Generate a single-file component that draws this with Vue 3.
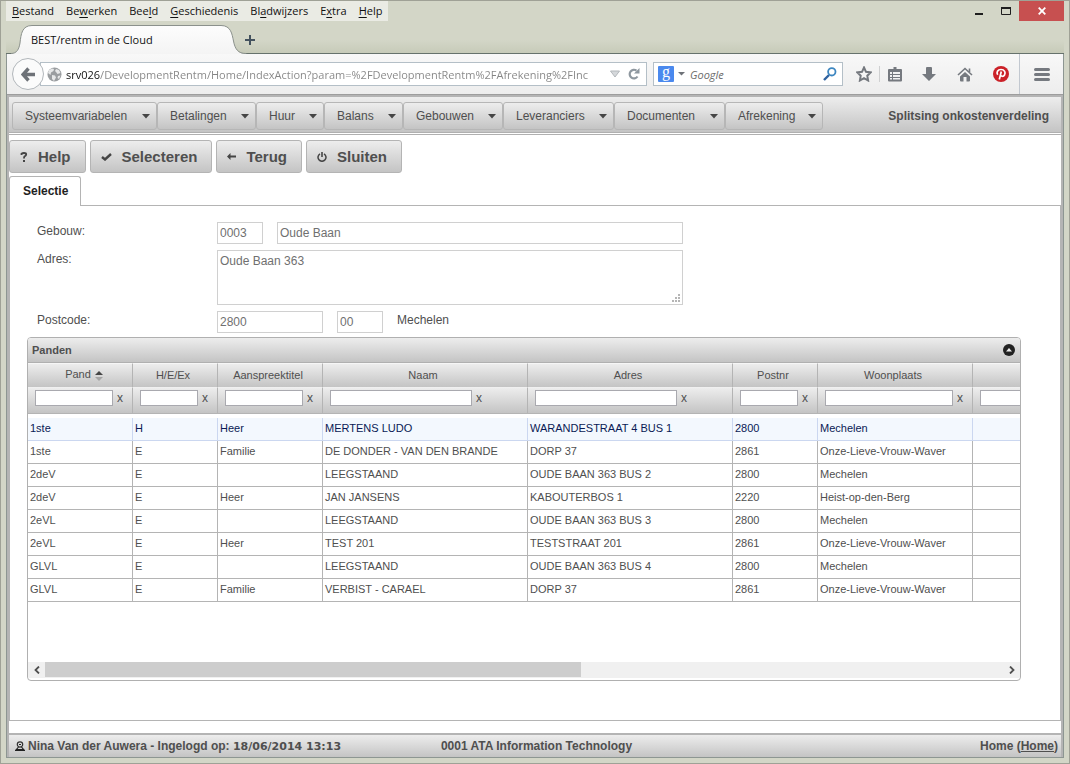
<script setup>
import { ref } from 'vue'

const browserMenu = [
  ['', 'B', 'estand'],
  ['Be', 'w', 'erken'],
  ['Bee', 'l', 'd'],
  ['', 'G', 'eschiedenis'],
  ['Bl', 'a', 'dwijzers'],
  ['E', 'x', 'tra'],
  ['', 'H', 'elp'],
]
const address = ref('srv026/DevelopmentRentm/Home/IndexAction?param=%2FDevelopmentRentm%2FAfrekening%2FInc')
const query = ref('')
const appMenu = ['Systeemvariabelen', 'Betalingen', 'Huur', 'Balans', 'Gebouwen', 'Leveranciers', 'Documenten', 'Afrekening']

const gebouwCode = ref('0003')
const gebouwNaam = ref('Oude Baan')
const adres = ref('Oude Baan 363')
const postcode = ref('2800')
const postcodeSub = ref('00')

const columns = [
  { label: 'Pand', size: 'c105', sorted: true },
  { label: 'H/E/Ex', size: 'c85' },
  { label: 'Aanspreektitel', size: 'c105' },
  { label: 'Naam', size: 'c205' },
  { label: 'Adres', size: 'c205' },
  { label: 'Postnr', size: 'c85' },
  { label: 'Woonplaats', size: 'c155' },
  { label: '', size: 'c205' },
]
const rows = [
  ['1ste', 'H', 'Heer', 'MERTENS LUDO', 'WARANDESTRAAT 4 BUS 1', '2800', 'Mechelen', ''],
  ['1ste', 'E', 'Familie', 'DE DONDER - VAN DEN BRANDE', 'DORP 37', '2861', 'Onze-Lieve-Vrouw-Waver', ''],
  ['2deV', 'E', '', 'LEEGSTAAND', 'OUDE BAAN 363 BUS 2', '2800', 'Mechelen', ''],
  ['2deV', 'E', 'Heer', 'JAN JANSENS', 'KABOUTERBOS 1', '2220', 'Heist-op-den-Berg', ''],
  ['2eVL', 'E', '', 'LEEGSTAAND', 'OUDE BAAN 363 BUS 3', '2800', 'Mechelen', ''],
  ['2eVL', 'E', 'Heer', 'TEST 201', 'TESTSTRAAT 201', '2861', 'Onze-Lieve-Vrouw-Waver', ''],
  ['GLVL', 'E', '', 'LEEGSTAAND', 'OUDE BAAN 363 BUS 4', '2800', 'Mechelen', ''],
  ['GLVL', 'E', 'Familie', 'VERBIST - CARAEL', 'DORP 37', '2861', 'Onze-Lieve-Vrouw-Waver', ''],
]
const selected = ref(0)
</script>

<template>
  <div class="window">
    <header class="titlebar">
      <nav class="browser-menu">
        <button v-for="m in browserMenu" :key="m.join('')">{{ m[0] }}<u>{{ m[1] }}</u>{{ m[2] }}</button>
      </nav>
      <div class="win-controls">
        <button aria-label="Minimaliseren"><svg width="8" height="10"><path d="M0 7h8v2H0z" fill="#1e1e1e" /></svg></button>
        <button aria-label="Maximaliseren"><svg width="10" height="8"><path d="M.5 1h9v6.5h-9z" fill="none" stroke="#1e1e1e" /><path d="M0 0h10v2H0z" fill="#1e1e1e" /></svg></button>
        <button class="close" aria-label="Sluiten"><svg width="8" height="8"><path d="M.7 .7l6.6 6.6M7.3 .7L.7 7.3" stroke="#fff" stroke-width="1.8" /></svg></button>
      </div>
    </header>

    <div class="tabstrip">
      <button class="browser-tab">
        <svg class="tab-shape" width="236" height="29" viewBox="0 0 236 29">
          <defs><linearGradient id="tg" x1="0" y1="0" x2="0" y2="1"><stop offset="0" stop-color="#fdfdfd" /><stop offset="1" stop-color="#f4f4f4" /></linearGradient></defs>
          <path d="M0 28.5C6 28.5 8 24 9 18C10 9 11 .5 21 .5H210C220 .5 221 9 222.500 16C224 24 227 28.500 233 28.500L236 29H0Z" fill="url(#tg)" />
          <path d="M0 28.500C6 28.500 8 24 9 18C10 9 11 .5 21 .5H210C220 .5 221 9 222.500 16C224 24 227 28.500 235 28.500" fill="none" stroke="#8b918c" />
        </svg>
        <span>BEST/rentm in de Cloud</span>
      </button>
      <button class="new-tab" aria-label="Nieuw tabblad"><svg width="10" height="10"><path d="M4 0h2v4h4v2H6v4H4V6H0V4h4z" fill="#44525e" /></svg></button>
    </div>

    <div class="frame">
      <div class="navbar">
        <button class="back" aria-label="Terug">
          <svg width="14" height="15" viewBox="0 0 14 15"><path d="M7.500 1.500L2 7.500l5.500 6M2.500 7.500H14" fill="none" stroke="#6e7278" stroke-width="3.400" /></svg>
        </button>
        <div class="urlbox">
          <svg width="15" height="15" viewBox="0 0 15 15"><circle cx="7.500" cy="7.500" r="7" fill="#9a9da0" /><path d="M2 3l3-1.500 2 .5-.5 2L4 5.500 3.500 8 1 6zM9 2l3 1 1.500 3-3 1-1.500-2 -1-1zM5 8l3 .5 1 2-2 3.500-2-2zM11 9l2.500-.5-1.500 3.500-1.500-1z" fill="#e6e7e8" /></svg>
          <input v-model="address" class="url" aria-label="Adres van de pagina" spellcheck="false">
          <svg width="10" height="8"><path d="M.5 1h9L5 7z" fill="#d5d8db" stroke="#b3b7bb" /></svg>
          <button aria-label="Vernieuwen"><svg width="12" height="12" viewBox="0 0 12 12"><path d="M9.500 8.500A4.300 4.300 0 1 1 8.500 2.600" fill="none" stroke="#8e979f" stroke-width="2.200" /><path d="M11.500 0v5.500H6z" fill="#8e979f" /></svg></button>
        </div>
        <div class="searchbox">
          <span class="engine" aria-hidden="true">g</span>
          <svg width="7" height="4"><path d="M0 0h7L3.500 3.500z" fill="#6e7278" /></svg>
          <input v-model="query" placeholder="Google" aria-label="Zoeken">
          <button aria-label="Zoeken"><svg width="14" height="14" viewBox="0 0 14 14"><path d="M6 8L1 13" stroke="#2f62a0" stroke-width="2.400" /><circle cx="8.800" cy="4.800" r="3.700" fill="#fff" stroke="#3d86c0" stroke-width="1.800" /></svg></button>
        </div>
        <button class="star" aria-label="Bladwijzer"><svg width="16" height="16" viewBox="0 0 16 16"><path d="M8 1.500l2 4.300 4.700.6-3.400 3.300.8 4.800L8 12.200l-4.100 2.300.8-4.800L1.300 6.400 6 5.800z" fill="#f6f6f6" stroke="#75797f" stroke-width="2" /></svg></button>
        <button class="list" aria-label="Bladwijzers tonen"><svg width="14" height="15" viewBox="0 0 14 15"><path d="M5.500 0h3v2H13q1 0 1 1v10.500q0 1-1 1H1q-1 0-1-1V3q0-1 1-1h4.500z" fill="#75797f" /><path d="M2 5h2v2H2zm3 0h7v2H5zM2 8h2v2H2zm3 0h7v2H5zM2 11h2v1.500H2zm3 0h7v1.500H5z" fill="#f2f2f2" /></svg></button>
        <button aria-label="Downloads"><svg width="14" height="15" viewBox="0 0 14 15"><path d="M4 1q0-1 1-1h4q1 0 1 1v6h4L7 14 0 7h4z" fill="#75797f" /></svg></button>
        <button aria-label="Startpagina"><svg width="16" height="15" viewBox="0 0 16 15"><path d="M8 5l5 4.500v4q0 1-1 1H9.500V10h-3v4.500H4q-1 0-1-1v-4z" fill="#75797f" /><path d="M1 8L8 1.500 15 8M12.500 1.500V5" fill="none" stroke="#75797f" stroke-width="1.600" /></svg></button>
        <button aria-label="Pinterest"><svg width="16" height="16" viewBox="0 0 16 16"><circle cx="8" cy="8" r="8" fill="#cb2128" /><path d="M6.300 13.500L8.300 5.500M4.700 8.700C3.200 6.500 4.500 3.500 8 3.500s5 3 3.500 5.500C10.300 11 8.300 10.300 7.500 9.300" fill="none" stroke="#fff" stroke-width="1.700" /></svg></button>
        <button class="burger" aria-label="Menu openen"><svg width="16" height="13"><path d="M1.500 1.500h13M1.500 6.500h13M1.500 11.500h13" stroke="#75797f" stroke-width="3" stroke-linecap="round" /></svg></button>
      </div>

      <main class="page">
        <div class="appbar">
          <nav class="app-menu">
            <button v-for="m in appMenu" :key="m">{{ m }}<svg width="8" height="5"><path d="M0 0h8L4 4.500z" fill="#454545" /></svg></button>
          </nav>
          <strong>Splitsing onkostenverdeling</strong>
        </div>

        <div class="work">
          <div class="actions">
            <button><svg width="8" height="10" viewBox="0 0 8 10"><path d="M1.500 3V1.800Q2.500 1 4 1q2.200 0 2.200 1.500Q6.200 3.500 4.500 4.500Q4 5 4 6.500" fill="none" stroke="#454545" stroke-width="1.800" /><path d="M3 8h2v2H3z" fill="#454545" /></svg>Help</button>
            <button><svg width="11" height="8" viewBox="0 0 11 8"><path d="M1 4l3 2.500L10 1" fill="none" stroke="#454545" stroke-width="2.400" /></svg>Selecteren</button>
            <button><svg width="9" height="7" viewBox="0 0 9 7"><path d="M3.500 0v2.500H9v2H3.500V7L0 3.500z" fill="#454545" /></svg>Terug</button>
            <button><svg width="10" height="10" viewBox="0 0 10 10"><path d="M3 1.800A4 4 0 1 0 7 1.800" fill="none" stroke="#454545" stroke-width="1.500" /><path d="M4.200 0h1.600v5H4.200z" fill="#454545" /></svg>Sluiten</button>
          </div>

          <div class="page-tabs"><button>Selectie</button></div>

          <section class="sheet">
            <form class="fields" @submit.prevent>
              <label for="gebouw">Gebouw:</label>
              <div class="line">
                <input id="gebouw" v-model="gebouwCode" class="short">
                <input v-model="gebouwNaam" class="long" aria-label="Naam gebouw">
              </div>
              <label for="adres">Adres:</label>
              <div class="area">
                <textarea id="adres" v-model="adres"></textarea>
                <svg class="grip" width="9" height="9"><path d="M7 0h2v2H7zM4 3h2v2H4zM7 3h2v2H7zM1 6h2v2H1zM4 6h2v2H4zM7 6h2v2H7z" fill="#b5b5b5" /></svg>
              </div>
              <label for="postcode">Postcode:</label>
              <div class="line">
                <input id="postcode" v-model="postcode" class="mid">
                <input v-model="postcodeSub" class="short" aria-label="Subpostcode">
                <span class="city">Mechelen</span>
              </div>
            </form>

            <section class="grid">
              <header>
                <h2>Panden</h2>
                <button aria-label="Inklappen"><svg width="12" height="12"><circle cx="6" cy="6" r="6" fill="#222" /><path d="M3 7.500h6L6 4z" fill="#eee" /></svg></button>
              </header>
              <div class="viewport">
                <table>
                  <colgroup><col v-for="(c, i) in columns" :key="i" :class="c.size"></colgroup>
                  <thead>
                    <tr class="heads">
                      <th v-for="(c, i) in columns" :key="i" scope="col" :class="{ sorted: c.sorted }">{{ c.label }}<svg v-if="c.sorted" width="8" height="10"><path d="M0 4h8L4 0z" fill="#454545" /><path d="M0 6h8L4 10z" fill="#a5a5a5" /></svg></th>
                    </tr>
                    <tr class="filters">
                      <td v-for="(c, i) in columns" :key="i">
                        <div :class="['filter', c.size]"><input :aria-label="'Filter ' + c.label"><button v-if="c.label" aria-label="Filter wissen">x</button></div>
                      </td>
                    </tr>
                  </thead>
                  <tbody>
                    <tr v-for="(r, i) in rows" :key="i" :class="{ active: i === selected }" @click="selected = i">
                      <td v-for="(v, j) in r" :key="j">{{ v }}</td>
                    </tr>
                  </tbody>
                </table>
              </div>
              <div class="scrollbar">
                <button aria-label="Naar links"><svg width="6" height="8"><path d="M5 .5L1.500 4 5 7.500" fill="none" stroke="#505050" stroke-width="1.800" /></svg></button>
                <div class="track"><div class="thumb"></div></div>
                <button aria-label="Naar rechts"><svg width="6" height="8"><path d="M1 .5L4.500 4 1 7.500" fill="none" stroke="#505050" stroke-width="1.800" /></svg></button>
              </div>
            </section>
          </section>
        </div>

        <footer class="status">
          <div class="user">
            <svg width="10" height="10" viewBox="0 0 10 10"><circle cx="5" cy="3.500" r="2.700" fill="none" stroke="#333" stroke-width="1.200" /><path d="M4 3.500h2M3.500 6L1.500 8.500h7L6.500 6M0 9.300h10" fill="none" stroke="#222" stroke-width="1.200" /></svg>
            <span>Nina Van der Auwera - Ingelogd op: <b>18/06/2014 13:13</b></span>
          </div>
          <div>0001 ATA Information Technology</div>
          <div class="home">Home (<a href="#">Home</a>)</div>
        </footer>
      </main>
    </div>
  </div>
</template>

<style>
body {
  background: #d3d6c7;
}
</style>

<style scoped>
* {
  box-sizing: border-box;
}
button,
input,
textarea {
  font: inherit;
  color: inherit;
  margin: 0;
  padding: 0;
  border: 0;
  border-radius: 0;
  background: none;
  outline: 0;
}
svg {
  display: block;
  flex: none;
}
.window {
  display: flex;
  flex-direction: column;
  min-height: 100vh;
  padding: 0 5px 5px;
  border: 1px solid #9fa196;
  background: #d3d6c7;
  font-family: "Open Sans", "Noto Sans", sans-serif;
  font-size: 11px;
  color: #111;
}
.titlebar {
  display: flex;
  justify-content: space-between;
  height: 20px;
}
.browser-menu {
  display: flex;
  background: #eaebe4;
}
.browser-menu button {
  padding: 0 6px;
  line-height: 20px;
}
.browser-menu u {
  text-underline-offset: 2px;
}
.win-controls {
  display: flex;
}
.win-controls button {
  display: grid;
  place-items: center;
  width: 27px;
}
.win-controls .close {
  width: 45px;
  background: #c75050;
}
.tabstrip {
  display: flex;
  align-items: flex-end;
  height: 33px;
  padding-left: 5px;
  background: linear-gradient(#d3d6c7 60%, #c7cbb9);
  border-bottom: 1px solid #66726c;
}
.browser-tab {
  position: relative;
  width: 234px;
  height: 29px;
  margin-bottom: -1px;
  padding-left: 20px;
  text-align: left;
}
.tab-shape {
  position: absolute;
  left: 0;
  top: 0;
}
.browser-tab span {
  position: relative;
}
.new-tab {
  align-self: center;
  padding-top: 6px;
}
.frame {
  flex: 1;
  display: flex;
  flex-direction: column;
  border: 1px solid #8d9692;
  border-top: 0;
}
.navbar {
  display: flex;
  align-items: center;
  height: 41px;
  padding-left: 5px;
  background: linear-gradient(#f8f8f8, #ededed);
  border-bottom: 1px solid #9d9d9d;
}
.navbar > button {
  display: grid;
  place-items: center;
  width: 36px;
  height: 40px;
}
.navbar > .back {
  position: relative;
  width: 32px;
  height: 32px;
  border: 1px solid #b2b7bb;
  border-radius: 50%;
  background: #fbfbfb;
}
.urlbox,
.searchbox {
  display: flex;
  align-items: center;
  height: 24px;
  border: 1px solid #b4bfc7;
  background: #fff;
}
.urlbox {
  flex: 1;
  min-width: 0;
  margin-left: -4px;
  padding: 0 6px;
}
.url {
  flex: 1;
  min-width: 0;
  margin: 0 8px 0 4px;
  background: linear-gradient(90deg, #111 34px, #858585 34px) text;
  color: transparent;
}
.urlbox button {
  margin-left: 8px;
}
.searchbox {
  width: 190px;
  margin-left: 6px;
  padding: 0 5px 0 4px;
}
.engine {
  width: 16px;
  height: 16px;
  margin-right: 4px;
  border-radius: 1px;
  background: #4a89ee;
  color: #fff;
  font: 16px/11px "Liberation Serif", serif;
  text-align: center;
}
.searchbox input {
  flex: 1;
  min-width: 0;
  margin-left: 5px;
}
.searchbox input::placeholder {
  color: #6c6c6c;
  font-style: italic;
}
.navbar > .star {
  width: 30px;
  margin-left: 6px;
}
.navbar > .list {
  width: 32px;
  height: 16px;
  padding-right: 2px;
  border-left: 1px solid #cfd0d1;
}
.navbar > .burger {
  width: 44px;
  border-left: 1px solid #c2c8d0;
}
.page {
  flex: 1;
  display: flex;
  flex-direction: column;
  border: 2px solid #b4b4b4;
  border-bottom: 0;
  background: #fff;
  font-family: "Liberation Sans", Arial, sans-serif;
  font-size: 12px;
  color: #4f4f4f;
}
.appbar {
  display: flex;
  align-items: center;
  justify-content: space-between;
  height: 36px;
  padding: 3px 12px 0 3px;
  background: linear-gradient(#ededed, #c4c4c4);
  border-bottom: 1px solid #b0b0b0;
}
.app-menu {
  display: grid;
  grid-template-columns: 145px 99px 68px 79px 100px 111px 111px 98px;
}
.app-menu button {
  display: flex;
  align-items: center;
  justify-content: space-between;
  height: 28px;
  padding: 0 6px 0 12px;
  border: 1px solid #b6b6b6;
  border-radius: 3px;
  background: linear-gradient(#ededed, #c4c4c4);
}
.work {
  flex: 1;
  display: flex;
  flex-direction: column;
  margin: 1px 0 12px;
  border-top: 1px solid #b0b0b0;
}
.actions {
  display: flex;
  gap: 4px;
  padding-top: 5px;
}
.actions button {
  display: flex;
  align-items: center;
  gap: 10px;
  height: 33px;
  padding: 0 14px 0 10px;
  border: 1px solid #b4b4b4;
  border-radius: 3px;
  background: linear-gradient(#ededed, #c4c4c4);
  font-size: 15px;
  font-weight: bold;
}
.page-tabs {
  display: flex;
  padding-top: 3px;
}
.page-tabs button {
  position: relative;
  height: 30px;
  margin-bottom: -1px;
  padding: 0 12px 2px 13px;
  border: 1px solid #b4b4b4;
  border-bottom: 0;
  border-radius: 3px 3px 0 0;
  background: #fff;
  color: #222;
  font-weight: bold;
}
.sheet {
  flex: 1;
  padding: 16px 39px 39px 17px;
  border: 1px solid #b4b4b4;
}
.fields {
  display: grid;
  grid-template-columns: 180px 466px;
  row-gap: 6px;
  margin: 0 0 4px 10px;
}
.fields label,
.city {
  line-height: 18px;
}
.line {
  display: flex;
  gap: 14px;
}
.fields input,
.fields textarea {
  height: 22px;
  padding: 0 2px;
  border: 1px solid #d0d0d0;
  background: #fff;
  color: #707070;
}
.fields .short {
  width: 46px;
}
.fields .mid {
  width: 106px;
}
.fields .long {
  flex: 1;
}
.area {
  position: relative;
}
.fields textarea {
  display: block;
  width: 100%;
  height: 55px;
  padding: 3px 2px;
  resize: none;
}
.grip {
  position: absolute;
  right: 3px;
  bottom: 2px;
}
.grid {
  border: 1px solid #b0b0b0;
  border-radius: 4px;
  overflow: hidden;
}
.grid header {
  display: flex;
  align-items: center;
  justify-content: space-between;
  height: 25px;
  padding: 0 5px 0 4px;
  background: linear-gradient(#ededed, #c4c4c4);
  border-bottom: 1px solid #b0b0b0;
}
h2 {
  margin: 0;
  font-size: 11px;
}
.viewport {
  height: 299px;
  overflow: hidden;
  font-size: 11px;
}
table {
  width: 1150px;
  table-layout: fixed;
  border-spacing: 0;
}
.c85 {
  width: 85px;
}
.c105 {
  width: 105px;
}
.c155 {
  width: 155px;
}
.c205 {
  width: 205px;
}
th,
td {
  height: 23px;
  padding: 0 2px 2px;
  border-right: 1px solid #b4b4b4;
  border-bottom: 1px solid #b4b4b4;
  overflow: hidden;
  white-space: nowrap;
}
th {
  height: 24px;
  padding: 0 6px 2px 2px;
  border-bottom: 0;
  border-top: 1px solid #f6f6f6;
  background: linear-gradient(#ededed, #c4c4c4);
  font-weight: normal;
}
.sorted {
  padding-left: 14px;
}
th svg {
  display: inline-block;
  margin-left: 4px;
  vertical-align: -3px;
}
.filters td {
  height: 27px;
  padding: 2px 0 7px 7px;
  border-top: 1px solid #f0f0f0;
  background: linear-gradient(#ededed, #c4c4c4);
}
.filter {
  display: flex;
  align-items: center;
}
.filter input {
  height: 16px;
  border: 1px solid #a9a9af;
  background: #fff;
}
.filter button {
  padding-left: 4px;
  line-height: 14px;
  font-size: 12px;
}
.filter.c85 input {
  width: 58px;
}
.filter.c105 input {
  width: 78px;
}
.filter.c155 input {
  width: 128px;
}
.filter.c205 input {
  width: 142px;
}
tbody::before {
  content: "";
  display: table-row;
  height: 4px;
}
.active td {
  background: #f3f8fe;
  border-color: #cbd7f0;
  color: #0a1a55;
}
.scrollbar {
  display: flex;
  height: 16px;
  margin-bottom: 2px;
  background: #f0f0f0;
}
.scrollbar button {
  display: grid;
  place-items: center;
  width: 17px;
}
.track {
  flex: 1;
}
.thumb {
  width: 56%;
  height: 15px;
  background: #cdcdcd;
}
.status {
  display: grid;
  grid-template-columns: 1fr auto 1fr;
  align-items: center;
  height: 24px;
  padding: 0 3px 0 6px;
  border-top: 2px solid #b4b4b4;
  background: linear-gradient(#ededed, #c4c4c4);
  font-weight: bold;
}
.user {
  display: flex;
  align-items: center;
  gap: 3px;
}
.user b {
  font-family: "DejaVu Sans", sans-serif;
  font-size: 11px;
}
.home {
  text-align: right;
}
.home a {
  color: inherit;
}
</style>
